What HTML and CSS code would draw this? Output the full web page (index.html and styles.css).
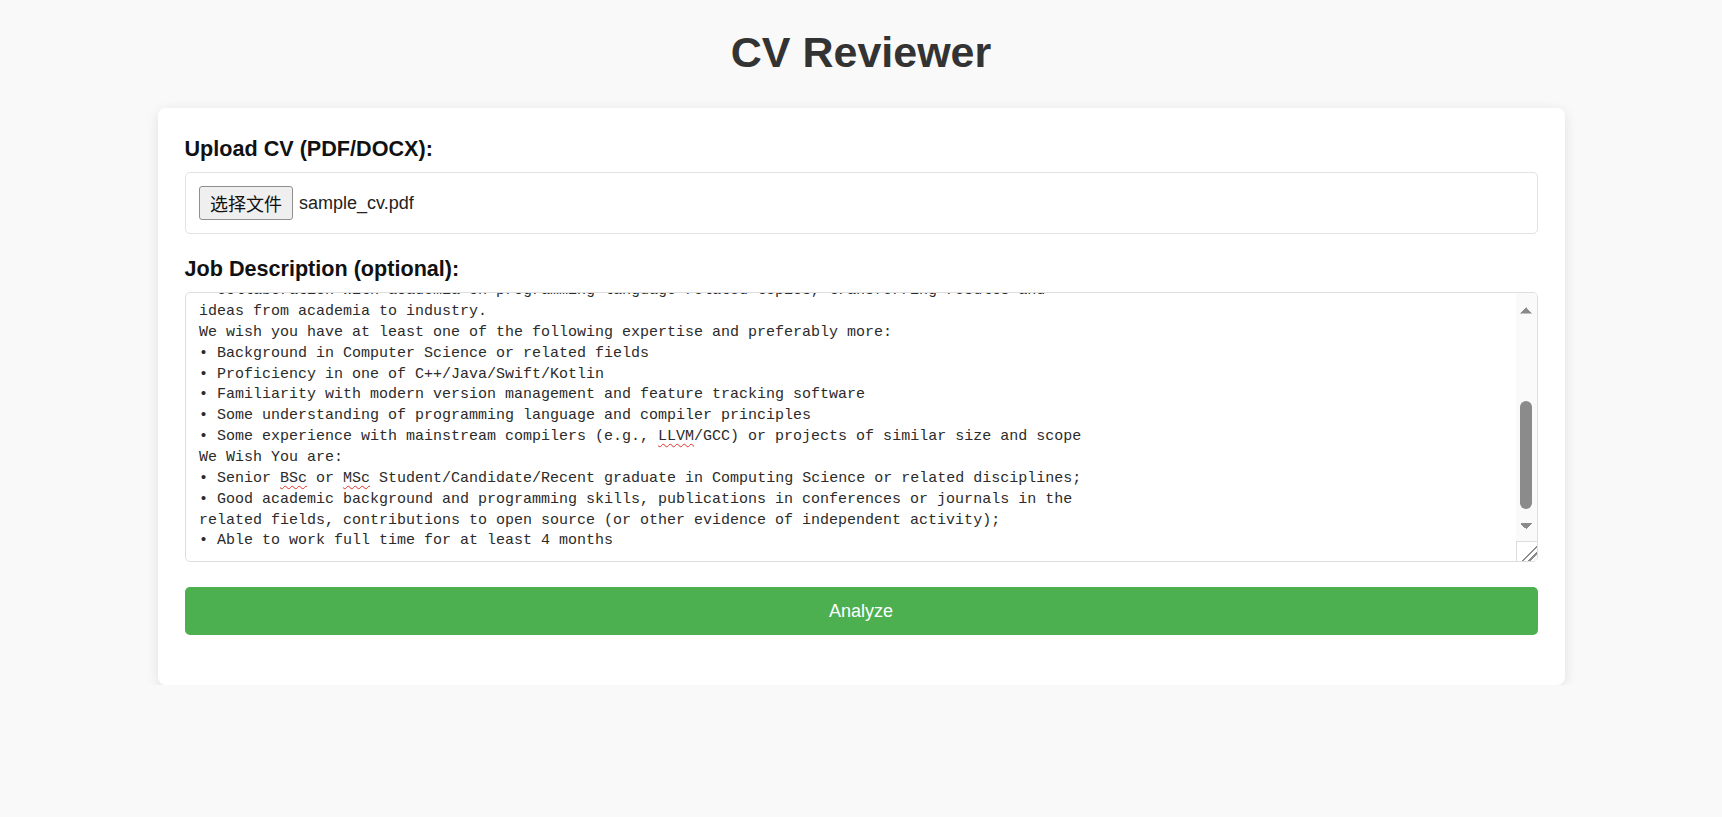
FILE: index.html
```html
<!DOCTYPE html>
<html lang="en">
<head>
<meta charset="utf-8">
<title>CV Reviewer</title>
<link rel="stylesheet" href="styles.css">
</head>
<body>
<h1 class="title">CV Reviewer</h1>
<main class="card">
  <form class="form">
    <div class="field">
      <label class="label">Upload CV (PDF/DOCX):</label>
      <div class="file-box">
        <button type="button" class="file-btn">选择文件</button>
        <span class="file-name">sample_cv.pdf</span>
      </div>
    </div>
    <div class="field field-jd">
      <label class="label">Job Description (optional):</label>
      <div class="jd">
        <div class="jd-view" role="textbox" aria-multiline="true"><div class="jd-text">Job Title: Compiler Engineer Intern (Programming Languages Lab)
Location: Edinburgh, United Kingdom
About the Team:
Our Programming Languages Lab works on next-generation compiler technologies,
language design and developer tools for a wide range of products and platforms.
Responsibilities:
• Design and implement compiler optimizations and new language features
• Analyze and improve the performance and quality of compiled code
• Collaboration with academia on programming language related topics, transferring results and
ideas from academia to industry.
We wish you have at least one of the following expertise and preferably more:
• Background in Computer Science or related fields
• Proficiency in one of C++/Java/Swift/Kotlin
• Familiarity with modern version management and feature tracking software
• Some understanding of programming language and compiler principles
• Some experience with mainstream compilers (e.g., <span class="typo">LLVM</span>/GCC) or projects of similar size and scope
We Wish You are:
• Senior <span class="typo">BSc</span> or <span class="typo">MSc</span> Student/Candidate/Recent graduate in Computing Science or related disciplines;
• Good academic background and programming skills, publications in conferences or journals in the
related fields, contributions to open source (or other evidence of independent activity);
• Able to work full time for at least 4 months</div></div>
        <div class="jd-bar" aria-hidden="true">
          <span class="sb-btn sb-up"></span>
          <span class="sb-track"><span class="sb-thumb"></span></span>
          <span class="sb-btn sb-down"></span>
          <span class="sb-resize"></span>
        </div>
      </div>
    </div>
    <button type="button" class="analyze">Analyze</button>
  </form>
</main>
</body>
</html>
```
FILE: styles.css
```css
html, body {
  margin: 0;
  padding: 0;
}

body {
  background: #f9f9f9;
  font-family: "Liberation Sans", Arial, sans-serif;
}

.title {
  margin: 28px 0 31px;
  text-align: center;
  font-size: 43px;
  line-height: 49px;
  font-weight: bold;
  color: #333;
}

.card {
  display: block;
  width: 1407px;
  box-sizing: border-box;
  margin: 0 auto;
  background: #fff;
  border-radius: 8px;
  box-shadow: 0 3px 13px rgba(0, 0, 0, 0.1);
  padding: 28px 27px 49.5px;
}

.form {
  margin: 0;
}

.field {
  margin-bottom: 22.25px;
}

.field-jd {
  margin-bottom: 24.8px;
}

.label {
  display: block;
  font-size: 21.6px;
  line-height: 25px;
  font-weight: bold;
  color: #111;
  margin-bottom: 11px;
}

.file-box {
  display: flex;
  align-items: center;
  gap: 6px;
  border: 1px solid #e2e2e2;
  border-radius: 5px;
  padding: 13px 13.5px;
}

.file-btn {
  width: 94px;
  height: 34px;
  padding: 0;
  margin: 0;
  background: #efefef;
  border: 1px solid #8f8f8f;
  border-radius: 3px;
  color: #111;
  font-family: "Noto Sans CJK SC", sans-serif;
  font-size: 18px;
  line-height: 32px;
}

.file-name {
  font-size: 18px;
  color: #222;
}

.jd {
  display: flex;
  height: 270px;
  box-sizing: border-box;
  border: 1px solid #dedede;
  border-radius: 5px;
  background: #fff;
  overflow: hidden;
}

.jd-view {
  flex: 1;
  min-width: 0;
  display: flex;
  flex-direction: column;
  justify-content: flex-end;
  overflow: hidden;
  padding: 13.5px 13.5px 9px;
  font-family: "Liberation Mono", monospace;
  font-size: 15px;
  line-height: 20.86px;
  color: #2b2b2b;
}

.jd-text {
  white-space: pre-wrap;
  flex: none;
}

.typo {
  text-decoration: underline wavy #e0302a;
  text-decoration-thickness: 1px;
  text-underline-offset: 3px;
}

.jd-bar {
  flex: none;
  width: 21px;
  display: flex;
  flex-direction: column;
  background: #fafafa;
}

.sb-btn {
  display: block;
  height: 32px;
  flex: none;
  background-repeat: no-repeat;
  background-size: 6.5px 6.5px;
}

.sb-up {
  background-image:
    linear-gradient(to bottom right, transparent 50%, #8b8b8b 50%),
    linear-gradient(to bottom left, transparent 50%, #8b8b8b 50%);
  background-position: 4px 13.3px, 10.5px 13.3px;
}

.sb-down {
  background-image:
    linear-gradient(to top right, transparent 50%, #8b8b8b 50%),
    linear-gradient(to top left, transparent 50%, #8b8b8b 50%);
  background-position: 4px 13.5px, 10.5px 13.5px;
}

.sb-track {
  flex: 1;
  display: flex;
  flex-direction: column;
  justify-content: flex-end;
  align-items: center;
}

.sb-thumb {
  display: block;
  width: 11.6px;
  height: 108px;
  border-radius: 6px;
  background: #8b8b8b;
}

.sb-resize {
  display: block;
  height: 20px;
  flex: none;
  background:
    linear-gradient(#dcdcdc, #dcdcdc) top left / 100% 1px no-repeat,
    linear-gradient(#dcdcdc, #dcdcdc) top left / 1px 100% no-repeat,
    linear-gradient(135deg, transparent 62%, #8b8b8b 62%, #8b8b8b 68%, transparent 68%, transparent 78%, #8b8b8b 78%, #8b8b8b 84%, transparent 84%) #fff;
}

.analyze {
  display: block;
  width: 100%;
  height: 48.4px;
  margin: 0;
  padding: 0;
  background: #4caf50;
  color: #fff;
  border: none;
  border-radius: 5px;
  font-family: "Liberation Sans", Arial, sans-serif;
  font-size: 18px;
}
```
